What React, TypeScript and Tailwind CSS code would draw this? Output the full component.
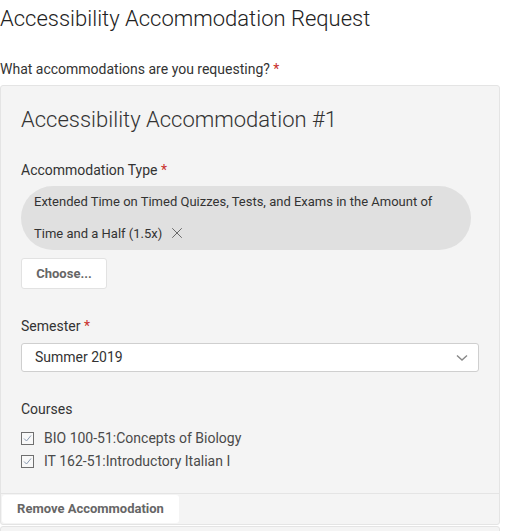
import { X } from "lucide-react";

function Req() {
  return <span className="text-[#c9302c]"> *</span>;
}

function Check() {
  return (
    <svg width="13" height="13" viewBox="0 0 13 13" className="shrink-0">
      <rect x="0.5" y="0.5" width="12" height="12" fill="#f8f8f8" stroke="#6f6f6f" />
      <path d="M3 6.5 L5.5 9 L10 3.5" fill="none" stroke="#8a9ab0" strokeWidth="1" />
    </svg>
  );
}

export default function App() {
  return (
    <div className="w-[513px] h-[531px] overflow-hidden bg-white font-['Roboto',sans-serif] text-[#333]">
      <h1 className="pt-[4px] text-[22px] leading-[30px] font-light text-[#222]">
        Accessibility Accommodation Request
      </h1>
      <p className="mt-[25px] text-[14px] leading-[20px] text-[#333]">
        What accommodations are you requesting?<Req />
      </p>

      <div className="mt-[6px] w-[500px] rounded-[3px] border border-[#e4e4e4] bg-[#f4f4f4]">
        <div className="px-[20px] pt-[19px] pb-[20px]">
          <h2 className="text-[22px] leading-[30px] font-light text-[#333]">
            Accessibility Accommodation #1
          </h2>

          <div className="mt-[25px] text-[14px] leading-[20px]">
            Accommodation Type<Req />
          </div>
          <div className="mt-[6px] w-[450px] rounded-[32px] bg-[#e0e0e0] pl-[13px] pr-[28px] text-[13px] leading-[32px] text-[#333]">
            Extended Time on Timed Quizzes, Tests, and Exams in the Amount of Time and a Half (1.5x)
            <X size={18} strokeWidth={1.3} className="ml-[6px] inline-block align-[-4px] text-[#666]" />
          </div>
          <button className="mt-[8px] h-[31px] w-[86px] rounded-[3px] border border-[#e2e2e2] bg-white text-[13px] font-bold text-[#666]">
            Choose...
          </button>

          <div className="mt-[27px] text-[14px] leading-[20px]">
            Semester<Req />
          </div>
          <div className="mt-[7px] flex h-[29px] w-[458px] items-center justify-between rounded-[3px] border border-[#cfcfcf] bg-white pl-[13px] pr-[10px] text-[14px] text-[#333]">
            <span>Summer 2019</span>
            <svg width="12" height="8" viewBox="0 0 12 8">
              <path d="M1 1.5 L6 6 L11 1.5" fill="none" stroke="#888" strokeWidth="1.4" />
            </svg>
          </div>

          <div className="mt-[27px] text-[14px] leading-[20px]">Courses</div>
          <div className="mt-[8px] flex flex-col text-[14px] leading-[23px] text-[#4a4a4a]">
            <label className="flex items-center gap-[10px]">
              <Check />
              <span>BIO 100-51:Concepts of Biology</span>
            </label>
            <label className="flex items-center gap-[10px]">
              <Check />
              <span>IT 162-51:Introductory Italian I</span>
            </label>
          </div>
        </div>
        <div className="border-t border-[#e4e4e4] p-[1px]">
          <button className="h-[28px] w-[177px] rounded-[3px] bg-white text-[13px] font-bold text-[#666]">
            Remove Accommodation
          </button>
        </div>
      </div>

      <div className="mt-[1px] h-[40px] w-[500px] rounded-[3px] border border-[#e4e4e4] bg-[#f4f4f4]"></div>
    </div>
  );
}
